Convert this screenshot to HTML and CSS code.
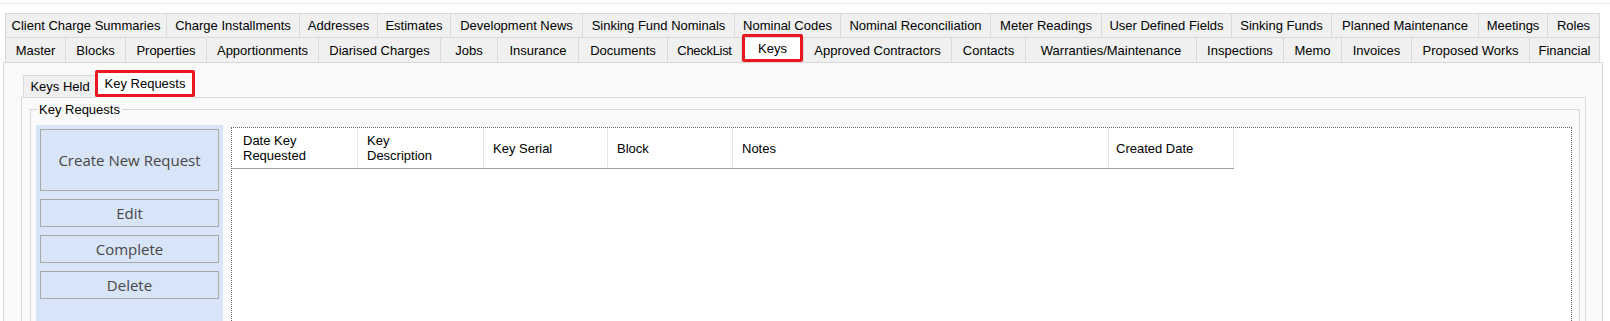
FILE: index.html
```html
<!DOCTYPE html>
<html>
	<head>
		<meta charset="UTF-8">
		<title>Keys</title>
		<link rel="stylesheet" href="styles.css">
	</head>
	<body>
		<div class="topline"></div>
		<div class="tabctl">
			<div class="tabrow top">
				<div class="tab">Client Charge Summaries</div>
				<div class="tab">Charge Installments</div>
				<div class="tab">Addresses</div>
				<div class="tab">Estimates</div>
				<div class="tab">Development News</div>
				<div class="tab">Sinking Fund Nominals</div>
				<div class="tab">Nominal Codes</div>
				<div class="tab">Nominal Reconciliation</div>
				<div class="tab">Meter Readings</div>
				<div class="tab">User Defined Fields</div>
				<div class="tab">Sinking Funds</div>
				<div class="tab">Planned Maintenance</div>
				<div class="tab">Meetings</div>
				<div class="tab">Roles</div>
			</div>
			<div class="tabrow bottom">
				<div class="tab">Master</div>
				<div class="tab">Blocks</div>
				<div class="tab">Properties</div>
				<div class="tab">Apportionments</div>
				<div class="tab">Diarised Charges</div>
				<div class="tab">Jobs</div>
				<div class="tab">Insurance</div>
				<div class="tab">Documents</div>
				<div class="tab tight">CheckList</div>
				<div class="tab sel">Keys</div>
				<div class="tab">Approved Contractors</div>
				<div class="tab">Contacts</div>
				<div class="tab">Warranties/Maintenance</div>
				<div class="tab">Inspections</div>
				<div class="tab">Memo</div>
				<div class="tab">Invoices</div>
				<div class="tab">Proposed Works</div>
				<div class="tab">Financial</div>
			</div>

			<div class="page">
				<div class="subctl">
					<div class="subtabs">
						<div class="stab">Keys Held</div>
						<div class="stab sel">Key Requests</div>
					</div>
					<div class="subpage">
						<fieldset class="group">
							<legend>Key Requests</legend>
							<div class="group-body">
								<div class="actions">
									<button type="button" class="btn big">Create New Request</button>
									<button type="button" class="btn">Edit</button>
									<button type="button" class="btn">Complete</button>
									<button type="button" class="btn">Delete</button>
								</div>
								<div class="list">
									<div class="list-head">
										<div class="col c1">Date Key<br>Requested</div>
										<div class="col c2">Key<br>Description</div>
										<div class="col c3">Key Serial</div>
										<div class="col c4">Block</div>
										<div class="col c5">Notes</div>
										<div class="col c6">Created Date</div>
									</div>
								</div>
							</div>
						</fieldset>
					</div>
				</div>
			</div>
		</div>
	</body>
</html>
```

FILE: styles.css
```css
*{
	margin: 0;
	padding: 0;
	box-sizing: border-box;
}
html, body{
	height: 321px;
	overflow: hidden;
}
body{
	background-color: #ffffff;
	font-family: "Liberation Sans", Arial, sans-serif;
	font-size: 13px;
	color: #000;
}
.topline{
	height: 4px;
	border-bottom: 1px solid #ececec;
}

/* main tab strip */
.tabctl{
	padding-top: 9px;
}
.tabrow{
	display: grid;
	margin-left: 5px;
	width: 1595px;
}
.tabrow.top{
	height: 24px;
	grid-template-columns: 162px 133px 78px 73px 132px 152px 106px 150px 111px 130px 100px 147px 69px 52px;
}
.tabrow.bottom{
	height: 25px;
	grid-template-columns: 61px 60px 81px 112px 122px 57px 81px 89px 74px 62px 148px 74px 171px 87px 58px 70px 118px 70px;
}
.tab{
	display: flex;
	align-items: center;
	justify-content: center;
	white-space: nowrap;
	background-color: #f0f0f0;
	border-top: 1px solid #d9d9d9;
	border-right: 1px solid #d9d9d9;
}
.tab:first-child{
	border-left: 1px solid #d9d9d9;
}
.tab.tight{
	letter-spacing: -0.3px;
}
.tab.sel{
	position: relative;
	background-color: #fff;
	padding-bottom: 3px;
}
.tab.sel::after{
	content: "";
	position: absolute;
	left: 0;
	right: 0;
	top: -4px;
	bottom: 0;
	border: 3px solid #ea1620;
	border-radius: 2px;
}

/* tab page */
.page{
	margin-left: 3px;
	width: 1600px;
	height: 320px;
	border: 1px solid #d9d9d9;
	background-color: #f9f9f9;
	padding: 11px 16px 0 17px;
}
.subtabs{
	display: flex;
	height: 23px;
	padding-left: 2px;
}
.stab{
	display: flex;
	align-items: center;
	justify-content: center;
	width: 74px;
	height: 22px;
	margin-top: 1px;
	background-color: #f0f0f0;
	border: 1px solid #d9d9d9;
	border-bottom: none;
}
.stab.sel{
	position: relative;
	z-index: 1;
	width: 100px;
	height: 26px;
	margin-top: -2px;
	margin-left: -2px;
	padding-bottom: 4px;
	background-color: #fff;
	border-bottom: none;
}
.stab.sel::after{
	content: "";
	position: absolute;
	left: -1px;
	right: -1px;
	top: -3px;
	bottom: 1px;
	border: 3px solid #ea1620;
	border-radius: 2px;
}
.subpage{
	height: 240px;
	border: 1px solid #d9d9d9;
	background-color: #fafafa;
	padding: 4px 5px 0 8px;
}

/* group box */
.group{
	border: 1px solid #d7d7d7;
	padding: 8px 7px 0 5px;
	height: 230px;
}
.group legend{
	margin-left: 1px;
	padding: 0 2px;
	line-height: 15px;
}
.group-body{
	display: flex;
	align-items: flex-start;
}
.actions{
	display: flex;
	flex-direction: column;
	gap: 8px;
	width: 187px;
	height: 220px;
	padding: 4px;
	background-color: #d8e4f8;
}
.btn{
	height: 28px;
	border: 1px solid #a8a8a8;
	background-color: #d8e4f8;
	font-family: "Open Sans", "Noto Sans", sans-serif;
	font-size: 15px;
	color: #474747;
}
.btn.big{
	height: 62px;
}

/* list view */
.list{
	flex: 1;
	height: 220px;
	margin-left: 8px;
	margin-top: 2px;
	border: 1px dotted #6a6a6a;
	background-color: #fff;
}
.list-head{
	display: flex;
	height: 41px;
	border-bottom: 1px solid #a0a0a0;
	width: 1002px;
}
.col{
	display: flex;
	align-items: center;
	padding-left: 9px;
	line-height: 15px;
	border-right: 1px solid #e5e5e5;
}
.c1{ width: 126px; padding-left: 11px; }
.c2{ width: 126px; }
.c3{ width: 124px; }
.c4{ width: 125px; }
.c5{ width: 376px; }
.c6{ width: 125px; padding-left: 7px; }
```
